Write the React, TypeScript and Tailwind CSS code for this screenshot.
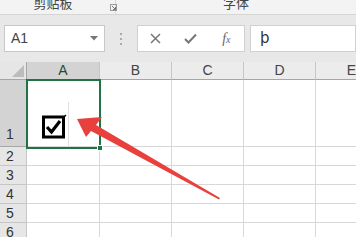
import React from "react";

const COLS = ["A", "B", "C", "D", "E"];
const WIDTHS = [73, 72, 72, 72, 72];

function CheckBox() {
  return (
    <svg width="25" height="25" viewBox="0 0 25 25">
      <rect x="1.5" y="3" width="20" height="20" fill="none" stroke="#000" strokeWidth="3" />
      <path d="M5 13 L9.5 18 L18 7" fill="none" stroke="#000" strokeWidth="3.2" strokeLinejoin="miter" />
      <path d="M20.5 4.5 L24 1" stroke="#000" strokeWidth="1.2" />
    </svg>
  );
}

export default function App() {
  const rows = [2, 3, 4, 5, 6];
  return (
    <div
      className="relative w-[356px] h-[237px] overflow-hidden bg-white text-[#333]"
      style={{ fontFamily: '"Liberation Sans", "Noto Sans CJK SC", sans-serif' }}
    >
      {/* Ribbon bottom */}
      <div className="h-[15px] bg-[#f3f3f3] border-b border-[#d6d6d6] flex items-end overflow-hidden">
        <div className="w-[122px] h-[14px] relative border-r border-[#d9d9d9] flex">
          <div className="w-[106px] text-center text-[13px] leading-[13px] -mt-[3px] text-[#444]">剪贴板</div>
          <svg className="absolute left-[110px] top-[4px]" width="7" height="7" viewBox="0 0 7 7">
            <rect x="0.5" y="0.5" width="6" height="6" fill="none" stroke="#999" strokeWidth="1" />
            <path d="M2 2 L5.5 5.5 M5.5 3 V5.5 H3" stroke="#777" strokeWidth="1" fill="none" />
          </svg>
        </div>
        <div className="w-[240px] h-[14px] flex">
          <div className="w-[240px] text-center text-[13px] leading-[13px] -mt-[3px] text-[#444]">字体</div>
        </div>
      </div>

      {/* Formula bar */}
      <div className="h-[47px] bg-[#e8e8e8] flex items-start pt-[10px]">
        <div className="ml-[4px] w-[101px] h-[27px] bg-white border border-[#c8c8c8] flex items-center justify-between pl-[6px] pr-[6px]">
          <span className="text-[14px] text-[#444]">A1</span>
          <svg width="8" height="5" viewBox="0 0 8 5">
            <path d="M0 0 H8 L4 4.5 Z" fill="#777" />
          </svg>
        </div>
        <div className="w-[32px] h-[27px] flex flex-col items-center justify-center gap-[3px]">
          <div className="w-[2px] h-[2px] bg-[#aaa]" />
          <div className="w-[2px] h-[2px] bg-[#aaa]" />
          <div className="w-[2px] h-[2px] bg-[#aaa]" />
        </div>
        <div className="w-[108px] h-[27px] bg-white border border-[#d0d0d0] flex items-center">
          <div className="w-[36px] flex justify-center">
            <svg width="11" height="11" viewBox="0 0 11 11">
              <path d="M1 1 L10 10 M10 1 L1 10" stroke="#777" strokeWidth="1.5" />
            </svg>
          </div>
          <div className="w-[36px] flex justify-center">
            <svg width="13" height="11" viewBox="0 0 13 11">
              <path d="M1 6 L4.5 9.5 L12 1.5" stroke="#777" strokeWidth="2" fill="none" />
            </svg>
          </div>
          <div className="w-[36px] flex justify-center">
            <span
              className="text-[14px] italic text-[#666] leading-none"
              style={{ fontFamily: '"Liberation Serif", serif' }}
            >
              f<span className="text-[10px]">x</span>
            </span>
          </div>
        </div>
        <div className="ml-[5px] flex-1 h-[27px] bg-white border border-[#d0d0d0] flex items-center pl-[9px]">
          <span className="text-[15px] text-[#333]" style={{ fontFamily: '"DejaVu Sans", sans-serif' }}>þ</span>
        </div>
      </div>

      {/* Grid */}
      <div className="flex flex-col">
        {/* Header row */}
        <div className="flex h-[18px]">
          <div className="w-[27px] h-[18px] shrink-0 bg-[#e6e6e6] border-r border-b border-[#a6a6a6] relative">
            <svg className="absolute right-[2px] bottom-[2px]" width="12" height="12" viewBox="0 0 12 12">
              <path d="M12 0 V12 H0 Z" fill="#bcbcbc" />
            </svg>
          </div>
          {COLS.map((c, i) => (
            <div
              key={c}
              className={`h-[18px] border-b flex items-center justify-center text-[14px] shrink-0 border-r border-r-[#c6c6c6] ${
                i === 0
                  ? "bg-[#d3d3d3] border-[#217346] text-[#1f4e33]"
                  : "bg-[#ececec] border-[#a6a6a6] text-[#444]"
              }`}
              style={{ width: WIDTHS[i] }}
            >
              {c}
            </div>
          ))}
        </div>
        {/* Row 1 */}
        <div className="flex h-[67px]">
          <div className="w-[27px] h-[67px] shrink-0 bg-[#d3d3d3] border-r border-b border-[#a6a6a6] flex items-end pl-[6px] pb-[1px] text-[14px] text-[#333]">
            1
          </div>
          {COLS.map((c, i) => (
            <div
              key={c}
              className="h-[67px] border-b border-r border-[#d8d8d8] shrink-0 relative"
              style={{ width: WIDTHS[i] }}
            >
              {i === 0 && (
                <>
                  <div className="pl-[15px] pt-[34px]">
                    <CheckBox />
                  </div>
                  <div className="absolute left-[41px] top-[22px] w-px h-[45px] bg-[#e0e0e0]" />
                </>
              )}
            </div>
          ))}
        </div>
        {rows.map((r) => (
          <div key={r} className="flex h-[19px]">
            <div className="w-[27px] h-[19px] shrink-0 bg-[#e6e6e6] border-r border-b border-[#c6c6c6] flex items-end pl-[6px] text-[14px] leading-[17px] text-[#333]">
              {r}
            </div>
            {COLS.map((c, i) => (
              <div
                key={c}
                className="h-[19px] border-b border-r border-[#d8d8d8] shrink-0"
                style={{ width: WIDTHS[i] }}
              />
            ))}
          </div>
        ))}
      </div>

      {/* Selection overlay */}
      <div className="absolute left-[26px] top-[79px] w-[75px] h-[70px] border-2 border-[#217346] pointer-events-none" />
      <div className="absolute left-[97px] top-[145px] w-[6px] h-[6px] bg-[#217346] border border-white" />

      {/* Red arrow */}
      <svg className="absolute left-0 top-0" width="356" height="237" viewBox="0 0 356 237">
        <path
          d="M77 119 L102 117 L96 125 L220 198 L219 199.5 L91 131 L86 137 Z"
          fill="#e8403c"
        />
      </svg>
    </div>
  );
}
